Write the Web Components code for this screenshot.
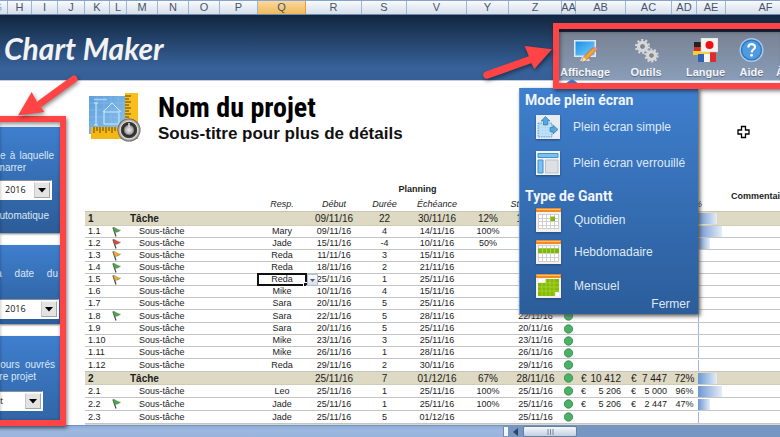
<!DOCTYPE html>
<html lang="fr">
<head>
<meta charset="utf-8">
<title>Gantt Chart Maker</title>
<style>
html,body{margin:0;height:100%;overflow:hidden;background:#fff}
body{font-family:"Liberation Sans",Arial,sans-serif;color:#1c1c1c}
</style>
</head>
<body>
<gantt-app></gantt-app>
<script>
const define=(name,html,init)=>customElements.define(name,class extends HTMLElement{
  constructor(){
    super();
    const t=document.createElement('template');
    t.innerHTML=html;
    this.attachShadow({mode:'open'}).append(t.content.cloneNode(true));
  }
  connectedCallback(){ if(init&&!this.ready){this.ready=true;init(this,this.shadowRoot);} }
});

/* Column letters of the sheet */
define('column-letters',`<style>
:host{display:flex;height:15px;box-sizing:border-box;flex:none;overflow:hidden;border-top:1px solid #86a3cc;border-bottom:1px solid #7189aa;background:linear-gradient(#f8fafd,#d6deeb);font-size:11px;line-height:13px;color:#465568}
span{flex:none;box-sizing:border-box;border-right:1px solid #9cb4d0;display:flex;justify-content:center}
span:last-child{flex:1 0 80px}
.on{background:linear-gradient(#f9d9a0,#f0b95a);border-right-color:#f29536}
.g{justify-content:flex-end;padding-right:5px;color:#7fb2dc}
</style>`,(el,root)=>{
  [['G',8],['H',24],['I',26],['J',27],['K',25],['L',17],['M',31],['N',31],['O',31],['P',38],['Q',48],['R',56],['S',45],['V',60],['Y',42],['Z',53],['AA',14],['AB',50],['AC',46],['AD',25],['AE',29],['AF',80]].forEach(([n,w])=>{
    const s=document.createElement('span');s.textContent=n;s.style.width=w+'px';
    if(n==='Q')s.className='on'; if(n==='G')s.className='g';
    root.append(s);
  });
});

/* Banner with logo and tools */
define('app-banner',`<style>
:host{display:flex;justify-content:space-between;height:65px;flex:none;background:linear-gradient(#12263f,#37629a 82%,#355f96);border-bottom:1px solid #c3cbdd;color:#f2f2f2}
.logo{display:flex;align-items:center;padding-left:4px;font:italic 700 30px/60px Lato,"Liberation Sans",sans-serif;white-space:nowrap}
nav{flex:0 0 221px;margin-top:14px;box-sizing:border-box;padding-top:6px;border-top:3px solid #1b2740;display:grid;grid-template-columns:52px 70px 49px 43px auto;align-items:start;background:linear-gradient(#788293,#8a9db9);overflow:hidden}
</style>
<div class="logo">Chart Maker</div>
<nav><slot></slot></nav>`);

define('tool-button',`<style>
:host{display:block;min-width:0}
button{all:unset;box-sizing:border-box;width:100%;display:flex;flex-direction:column;align-items:center;gap:2px;font-size:11px;line-height:15px;font-weight:700;color:#f3f5f8;white-space:nowrap;text-shadow:0 1px 1px #5a6780;cursor:pointer}
:host([cut]) button{align-items:flex-start;padding-left:3px}
.icon{height:25px;display:flex;align-items:center}
::slotted(svg){display:block}
</style><button type="button"><span class="icon"><slot name="icon"></slot></span><span><slot></slot></span></button>`);

/* Blue side cards */
define('side-card',`<style>
:host{display:block;box-sizing:border-box;overflow:hidden;color:#dce8f6;font-size:10px;line-height:12px;background:linear-gradient(#3f7fce,#2c5c98);box-shadow:0 1px 2px #777}
</style><slot></slot>`);

define('card-line',`<style>
:host{display:flex;justify-content:flex-end;white-space:nowrap;width:54px}
:host([spread]){justify-content:space-between}
</style><slot></slot>`);

define('drop-list',`<style>
:host{display:block;position:relative;height:20px;box-sizing:border-box;border:1px solid #8a8f98;border-left:0;border-right-color:#fff;border-bottom-color:#fff;background:#fff}
select{appearance:none;border:0;margin:0;width:100%;height:100%;background:none;padding:0 0 0 5px;font:9px/18px "Open Sans","Noto Sans",sans-serif;color:#111;outline:0}
:host([cut]) select{padding-left:0}
span{position:absolute;right:1px;top:1px;bottom:1px;width:16px;box-sizing:border-box;border:1px solid;border-color:#f6f6f6 #a5a5a5 #a5a5a5 #c8c8c8;background:#e3e3e3;pointer-events:none;display:flex;align-items:center;justify-content:center}
</style><select><option></option></select><span><svg width="8" height="5"><path d="M0 0h8L4 4.5z" fill="#000"/></svg></span>`,(el,root)=>{
  root.querySelector('option').textContent=el.getAttribute('value');
  root.querySelector('select').setAttribute('aria-label',el.getAttribute('label'));
});

define('project-title',`<style>
:host{display:flex;gap:17px;padding:11px 0 0 4px;color:#000}
svg{flex:none}
h1{margin:0;font:700 28px/32px "Roboto Condensed",Roboto,"Liberation Sans",sans-serif;white-space:nowrap}
h2{margin:0;font-size:17px;line-height:20px;font-weight:700;white-space:nowrap;color:#111}
</style>
<svg width="52" height="50" viewBox="0 0 52 50">
<defs><linearGradient id="b" x2="1" y2="1"><stop stop-color="#5f9fdb"/><stop offset="1" stop-color="#8cc0ee"/></linearGradient>
<radialGradient id="k"><stop offset="0" stop-color="#eee"/><stop offset=".35" stop-color="#aaa"/><stop offset=".5" stop-color="#2d2925"/><stop offset=".68" stop-color="#49433d"/><stop offset=".75" stop-color="#ddd"/><stop offset=".9" stop-color="#9b9b9b"/><stop offset="1" stop-color="#555"/></radialGradient></defs>
<path d="M0 4h37v38H0z" fill="url(#b)"/><path d="M0 11h37M0 18h37M0 25h37M8 4v32M15 4v32M22 4v32M29 4v32" stroke="#8fc0ec" stroke-width=".5"/>
<path d="M14 20 23 11l9 9M15 19v13h15V19M15 20h15M7 11v22M5 11h4M5 33h4" fill="none" stroke="#d0e8fb" stroke-width="1"/>
<path d="M5 7.500h13" stroke="#a8d0f4" stroke-width="1.500"/>
<path d="M36 1h13v46H2V35h34z" fill="#f5b714"/><path d="M36 1h13v34H36z" fill="#f8be1c"/>
<path d="M36 4h6M36 7h4M36 10h6M36 13h4M36 16h6M36 19h4M36 22h6M36 25h4M5 35v6M8 35v4M11 35v6M14 35v4M17 35v6M20 35v4M23 35v6M26 35v4" stroke="#5f4708" stroke-width="1"/>
<circle cx="40" cy="38" r="11.5" fill="url(#k)"/><path d="M40 31v4" stroke="#ddd" stroke-width="1.500"/>
</svg>
<div><h1>Nom du projet</h1><h2>Sous-titre pour plus de détails</h2></div>`);

/* Task table */
define('task-table',`<style>
:host{display:block;margin-top:38px}
table{border-collapse:separate;border-spacing:0;table-layout:fixed;width:100%;min-width:695px;font-size:9px;line-height:11px}
th,td{padding:0;font-weight:400;text-align:center;white-space:nowrap;vertical-align:middle}
thead tr{height:15px}thead i{display:flex;justify-content:center;margin:0 -10px}
thead tr+tr{height:14px}
td{height:11px;border-bottom:1px solid #c4c4c4;position:relative}
.tall td{height:12px}
.group td{background:#ddd9c3;font-size:10px;height:14px;border-color:#cfccba}
.group.tall td{height:12px}
.first td{height:13px;border-top:1px solid #c8c5b5}
td.l{text-align:left;padding-left:3px}
td.n{text-align:left;padding-left:12px}
.group td.l,.group td.n{font-weight:700}
.group td.n{padding-left:3px}
svg{display:block;margin:auto}
.flag svg{margin:0 0 0 2px}
.money{display:flex;justify-content:space-between;padding:0 5px}
.bar{display:block;height:11px;background:linear-gradient(90deg,#6d97d2,#e6edf8);margin-left:1px}
.none{width:1px;background:#9db9e0}
.pick{position:absolute;inset:-1px -1px -1px -1px;border:2px solid #111}
.pick::after{content:"";position:absolute;right:-3px;bottom:-3px;width:3px;height:3px;background:#111;border:1px solid #fff}
button{position:absolute;z-index:1;left:49px;top:0;width:11px;height:12px;padding:0;border:1px solid #b3bccb;background:linear-gradient(#fff,#d7dce6);display:flex;align-items:center}
</style>
<table><colgroup></colgroup><thead>
<tr><th colspan="5"></th><th colspan="2"><b style="padding-left:6px">Planning</b></th><th colspan="7"></th><th rowspan="2" style="text-align:left;padding-left:5px"><b>Commentaires</b></th></tr>
<tr><th colspan="3"></th><th><i>Resp.</i></th><th><i>Début</i></th><th><i>Durée</i></th><th><i>Échéance</i></th><th></th><th><i>Statut actuel</i></th><th></th><th></th><th></th><th></th><th style="text-align:left"><i style="justify-content:flex-start;margin:0 0 0 -3px">%</i></th></tr>
</thead><tbody></tbody></table>`,(el,root)=>{
  root.querySelector('colgroup').innerHTML=[25,17,131,48,56,45,60,42,53,14,50,46,25,29].map(w=>`<col style="width:${w}px">`).join('')+'<col>';
  const colours={g:'#4aa84a',r:'#e0453f',o:'#f0a832'};
  const flag=c=>c?`<svg width="10" height="10" viewBox="0 0 10 10"><path d="M1 .5 4 9.5" stroke="#444" stroke-width="1.2"/><path d="M1 .6c2-.8 3 1.6 7.6 2.6C7 4.600 5 5.600 2.700 5.300z" fill="${colours[c]}" stroke="#667055" stroke-width=".4"/></svg>`:'';
  const dot='<svg width="10" height="10" viewBox="0 0 10 10"><circle cx="4.500" cy="5" r="4.200" fill="#4cb166" stroke="#35804a" stroke-width=".8"/></svg>';
  const money=v=>v?`<div class="money"><span>€</span><span>${v}</span></div>`:'';
  const rows=[
   ['1','','Tâche','','09/11/16','22','30/11/16','12%','14/11/16',0,'','','',19],
   ['1.1','g','','Mary','09/11/16','4','14/11/16','100%','',0,'','','',24],
   ['1.2','r','','Jade','15/11/16','-4','10/11/16','50%','',0,'','','',12],
   ['1.3','o','','Reda','11/11/16','3','15/11/16','','',0,'','','',0],
   ['1.4','g','','Reda','18/11/16','2','21/11/16','','',0,'','','',0],
   ['1.5','o','','Reda','25/11/16','1','25/11/16','','25/11/16',0,'','','',0],
   ['1.6','','','Mike','10/11/16','4','15/11/16','','',0,'','','',0],
   ['1.7','','','Sara','20/11/16','5','25/11/16','','20/11/16',0,'','','',0],
   ['1.8','g','','Sara','22/11/16','5','28/11/16','','22/11/16',1,'','','',0],
   ['1.9','','','Sara','20/11/16','5','25/11/16','','20/11/16',1,'','','',0],
   ['1.10','','','Mike','23/11/16','3','25/11/16','','23/11/16',1,'','','',0],
   ['1.11','','','Mike','26/11/16','1','28/11/16','','26/11/16',1,'','','',0],
   ['1.12','','','Reda','29/11/16','2','30/11/16','','29/11/16',1,'','','',0],
   ['2','','Tâche','','25/11/16','7','01/12/16','67%','28/11/16',1,'10 412','7 447','72%',19],
   ['2.1','','','Leo','25/11/16','1','25/11/16','100%','25/11/16',1,'5 206','5 000','96%',24],
   ['2.2','g','','Jade','25/11/16','1','25/11/16','100%','25/11/16',1,'5 206','2 447','47%',12],
   ['2.3','','','Jade','25/11/16','5','01/12/16','','25/11/16',1,'','','',0],
   ['3','','Tâche','','','','','','',0,'','','',0]];
  const tall=['1.8','1.12','2','2.1','2.2','2.3'];
  root.querySelector('tbody').innerHTML=rows.map(r=>{
    const cls=[r[2]?'group':'',tall.includes(r[0])?'tall':'',r[0]==='1'?'first':''].join(' ').trim();
    const pick=r[0]==='1.5'?'<span class="pick"></span><button type="button" aria-label="Choisir"><svg width="5" height="3"><path d="M0 0h5L2.500 3z" fill="#4a5a78"/></svg></button>':'';
    return `<tr class="${cls}"><td class="l">${r[0]}</td><td class="flag">${flag(r[1])}</td><td class="n">${r[2]||'Sous-tâche'}</td><td>${r[3]}${pick}</td>`+
      r.slice(4,9).map(v=>`<td>${v}</td>`).join('')+`<td>${r[9]?dot:''}</td><td>${money(r[10])}</td><td>${money(r[11])}</td><td>${r[12]}</td><td><span class="bar${r[13]?'':' none'}"${r[13]?` style="width:${r[13]}px"`:''}></span></td><td></td></tr>`;
  }).join('');
});

/* Display menu */
define('view-menu',`<style>
:host{display:flex;flex-direction:column;box-sizing:border-box;width:179px;padding:3px 8px 4px 5px;color:#dfe9f6;font-size:12px;line-height:16px;background:linear-gradient(#3f7fce,#2b5d9a);border-left:1px solid #5a93da;box-shadow:2px 2px 4px #555}
button{all:unset;cursor:pointer;align-self:flex-end;line-height:12px}
.tip{position:absolute;left:40px;top:-9px}
</style><svg class="tip" width="24" height="9"><path d="M0 9 9 2q3-3 6 0l9 7z" fill="#3f7fce"/></svg><slot></slot><button type="button">Fermer</button>`);
define('menu-heading',`<style>:host{display:block}h3{margin:0;font:700 14px/18px Roboto,"Liberation Sans",sans-serif;color:#f0f5fb}</style><h3><slot></slot></h3>`);
define('menu-entry',`<style>:host{display:block}
button{all:unset;box-sizing:border-box;width:100%;display:flex;align-items:center;gap:13px;padding-left:11px;cursor:pointer;white-space:nowrap}
::slotted(svg){display:block;flex:none;filter:drop-shadow(0 1px 1px #23497a)}
</style><button type="button"><slot name="icon"></slot><span><slot></slot></span></button>`);

/* Bottom scroll strip */
define('sheet-scroll',`<style>
:host{display:flex;flex:none;height:12px;box-sizing:border-box;border-top:1px solid #6f94c9;background:#7797c2}
.tabs{flex:0 0 503px;background:linear-gradient(#8badda,#9eb8de 40%,#98b3dc)}
.grip{flex:0 0 5px;background:#f3f6fb;border-left:1px solid #6d87ae;box-sizing:border-box;margin:1px 0}
.track{flex:1;display:flex;align-items:center;padding-left:5px;gap:5px}
.thumb{width:54px;height:11px;box-sizing:border-box;border:1px solid #65809f;border-radius:2px;background:linear-gradient(#f5f8fc,#c4cfe0);display:flex;align-items:center;justify-content:center}
</style><div class="tabs"></div><div class="grip"></div><div class="track"><svg width="5" height="8"><path d="M5 0v8L0 4z" fill="#2c4468"/></svg><div class="thumb"><svg width="7" height="6"><path d="M1 0v6M3.500 0v6M6 0v6" stroke="#78879e"/></svg></div></div>`);

/* Red annotations */
define('red-frame',`<style>:host{position:absolute;box-sizing:border-box;border:6px solid #fe4444;box-shadow:1px 2px 4px #0008,inset 1px 2px 4px #0007;pointer-events:none}</style>`);

define('gantt-app',`<style>
:host{display:flex;flex-direction:column;height:100vh;position:relative;overflow:hidden}
main{flex:1;min-height:0;overflow:hidden;display:grid;grid-template-columns:60px 1fr;column-gap:25px;background:#fff}
aside{padding-top:46px;display:flex;flex-direction:column;gap:12px}
.c1{padding:23px 0 11px}.c2{padding:23px 0 5px}.c3{padding:23px 0 40px}
.c1 drop-list{width:52px;margin:6px 0 10px}.c2 drop-list{width:59px;margin-top:19px}.c3 drop-list{width:43px;margin-top:8px}
.w26{width:26px}.w49{width:49px}.w36{width:36px}
.du{width:64px;margin-left:-6px}.ours{width:57px;margin-left:-2px}
section{min-width:0}
view-menu{position:absolute;right:82px;top:88px}
.tools{right:-8px;width:235px;top:23px;height:66px}
.cards{left:-8px;width:74px;top:116px;bottom:11px}
.arrow{position:absolute;filter:drop-shadow(1px 2px 2px #0007)}
.a1{left:10px;top:70px}.a2{right:225px;top:40px}
.cursor{position:absolute;right:30px;top:125px}
</style>
<column-letters></column-letters>
<app-banner>
<tool-button><svg slot="icon" width="25" height="25" viewBox="0 0 25 25"><defs><linearGradient id="s" x2="1" y2="1"><stop stop-color="#1c8fe8"/><stop offset="1" stop-color="#77d0ff"/></linearGradient></defs><path d="M1 2h22v17H1z" fill="#dfe9f1"/><path d="M2.500 3.500h19v14h-19z" fill="url(#s)"/><path d="M9 19h6l2 4H7z" fill="#d7dde4"/><path d="m9 24 1.500-5L20 9.500l3 3L13.500 22z" fill="#f4a233" stroke="#9c5a17" stroke-width=".6"/><path d="m20 9.500 1.500-1.300 3 3L23 12.500z" fill="#e98ba0"/><path d="m9 24 1.500-5 3 3z" fill="#f7dfb6"/></svg>Affichage</tool-button>
<tool-button><svg slot="icon" width="25" height="25" viewBox="0 0 25 25"><g fill="none" stroke="#d5d7d9"><circle cx="8.500" cy="8.500" r="4" stroke-width="3.600"/><circle cx="8.500" cy="8.500" r="6.500" stroke-width="2.200" stroke-dasharray="2.040 2.040"/><circle cx="17.500" cy="17.500" r="3.800" stroke-width="3.400"/><circle cx="17.500" cy="17.500" r="6" stroke-width="2.200" stroke-dasharray="1.885 1.885"/></g><g fill="#858c96" stroke="#777" stroke-width=".7"><circle cx="8.500" cy="8.500" r="1.800"/><circle cx="17.500" cy="17.500" r="1.800"/></g></svg>Outils</tool-button>
<tool-button><svg slot="icon" width="25" height="25" viewBox="0 0 25 25"><path d="M1 4h14v5H1z" fill="#222"/><path d="M1 9h14v4H1z" fill="#d92b22"/><path d="M0 13h17v4H0z" fill="#f8cf34"/><path d="M5 16h6v8H5z" fill="#2e62b5"/><path d="M11 16h6v8h-6z" fill="#f5f5f5"/><path d="M17 14h6v10h-6z" fill="#e02c2c"/><path d="M8 0h17v14H8z" fill="#f5f2f0" stroke="#ccc" stroke-width=".5"/><circle cx="16.500" cy="7" r="4" fill="#f20d12"/></svg>Langue</tool-button>
<tool-button><svg slot="icon" width="25" height="25" viewBox="0 0 25 25"><circle cx="12.500" cy="12" r="11.300" fill="#2a74c0" stroke="#a7c8ea" stroke-width="1.400"/><circle cx="12.500" cy="12" r="9.300" fill="#4f9be0"/><path d="M9.300 9.600c0-4.600 6.700-4.300 6.700-.5 0 2.400-3.400 2.500-3.400 5.400" fill="none" stroke="#fff" stroke-width="2.200"/><circle cx="12.600" cy="17.300" r="1.400" fill="#fff"/></svg>Aide</tool-button>
<tool-button cut>À propos</tool-button>
</app-banner>
<main>
<aside>
<side-card class="c1"><card-line spread><span>e</span><span>à</span><span>laquelle</span></card-line><card-line class="w26">marrer</card-line><drop-list value="2016" label="Année de début"></drop-list><card-line class="w49">automatique</card-line></side-card>
<side-card class="c2"><card-line spread class="du"><span>la</span><span>date</span><span>du</span></card-line><drop-list value="2016" label="Année"></drop-list></side-card>
<side-card class="c3"><card-line spread class="ours"><span>jours</span><span>ouvrés</span></card-line><card-line class="w36">re projet</card-line><drop-list cut value="t" label="Jours ouvrés"></drop-list></side-card>
</aside>
<section><project-title></project-title><task-table></task-table></section>
</main>
<sheet-scroll></sheet-scroll>
<view-menu>
<menu-heading>Mode plein écran</menu-heading>
<menu-entry style="margin-top:6px"><svg slot="icon" width="24" height="24" viewBox="0 0 24 24"><path d="M0 0h24v24H0z" fill="#e9ecee"/><path d="M2 8h14v14H2z" fill="#a9d4f2" stroke="#5fa9da" stroke-dasharray="1.500 1"/><path d="M3 11h12M3 14h12M3 17h12M3 20h12M5 9v12M8 9v12M11 9v12M14 9v12" stroke="#cfe8f9" stroke-width=".8"/><path d="M7.500 10V6H5l4.500-4.500L14 6h-2.500v4zM14 12.500h3V10l5 4.500-5 4.500v-2.500h-3z" fill="#59a6d8" stroke="#2f7db5" stroke-width=".7"/></svg>Plein écran simple</menu-entry>
<menu-entry style="margin-top:12px"><svg slot="icon" width="24" height="24" viewBox="0 0 24 24"><path d="M0 0h24v24H0z" fill="#f1f4f6"/><path d="M2 2.500h20v4H2zM2 9h5v13H2z" fill="#7cc1ee" stroke="#3f94cf"/><path d="M9.500 9H22v13H9.500z" fill="#dcdfe3" stroke="#bcc1c7"/></svg>Plein écran verrouillé</menu-entry>
<menu-heading style="margin-top:12px">Type de Gantt</menu-heading>
<menu-entry style="margin-top:3px"><svg slot="icon" width="25" height="24" viewBox="0 0 25 24"><path d="M0 0h25v24H0z" fill="#f2efec"/><path d="M0 0h25v4H0z" fill="#f08a24"/><path d="M1 1.500h23" stroke="#fbc07c"/><path d="M2 6h21v15H2z" fill="#cfcfcf"/><path d="M3 7h3v3H3zM7 7h3v3H7zM11 7h3v3h-3zM15 7h3v3h-3zM19 7h3v3h-3zM3 11h3v2H3zM7 11h3v2H7zM11 11h3v2h-3zM19 11h3v2h-3zM3 14h3v3H3zM7 14h3v3H7zM11 14h3v3h-3zM15 14h3v3h-3zM19 14h3v3h-3zM3 18h3v2H3zM7 18h3v2H7zM11 18h3v2h-3zM15 18h3v2h-3zM19 18h3v2h-3z" fill="#fff"/><path d="M14.500 8.500H19V13h-4.500z" fill="#7fb800"/></svg>Quotidien</menu-entry>
<menu-entry style="margin-top:8px"><svg slot="icon" width="25" height="24" viewBox="0 0 25 24"><path d="M0 0h25v24H0z" fill="#f2efec"/><path d="M0 0h25v4H0z" fill="#f08a24"/><path d="M1 1.500h23" stroke="#fbc07c"/><path d="M2 5h21v17H2z" fill="#cfcfcf"/><path d="M3 6h3v2H3zM7 6h3v2H7zM11 6h3v2h-3zM15 6h3v2h-3zM19 6h3v2h-3zM3 14h3v3H3zM7 14h3v3H7zM11 14h3v3h-3zM15 14h3v3h-3zM19 14h3v3h-3zM3 18h3v3H3zM7 18h3v3H7zM11 18h3v3h-3zM15 18h3v3h-3zM19 18h3v3h-3z" fill="#fff"/><path d="M2 8.500h21V13H2z" fill="#7fb800"/><path d="M6.500 8.500V13M10.500 8.500V13M14.500 8.500V13M18.500 8.500V13" stroke="#a9d33f"/></svg>Hebdomadaire</menu-entry>
<menu-entry style="margin-top:10px"><svg slot="icon" width="25" height="24" viewBox="0 0 25 24"><path d="M0 0h25v24H0z" fill="#f2efec"/><path d="M0 0h25v4H0z" fill="#f08a24"/><path d="M1 1.500h23" stroke="#fbc07c"/><path d="M2 9h8V5h13v13h-4v4H2z" fill="#86bc00"/><path d="M2 13h21M2 17h21M10 9h13M6 9v13M10 5v17M14 5v17M18 5v17" stroke="#a9d33f" stroke-width=".8"/><path d="M3 5h3v3H3zM7 5h2v3H7zM20 19h3v3h-3z" fill="#fff"/></svg>Mensuel</menu-entry>
</view-menu>
<red-frame class="tools"></red-frame><red-frame class="cards"></red-frame>
<svg class="arrow a1" width="72" height="50" viewBox="10 70 72 50"><path d="M41 103 74 79" stroke="#fe4444" stroke-width="7" stroke-linecap="round"/><path d="M18 115.500 31.700 92l4 7.500 5 7.500 3.700 5z" fill="#fe4444"/></svg>
<svg class="arrow a2" width="75" height="45" viewBox="480 40 75 45"><path d="M487 75 532 59" stroke="#fe4444" stroke-width="7.500" stroke-linecap="round"/><path d="M552 49.300 524.700 46l4 10 2.500 7 3.200 6z" fill="#fe4444"/></svg>
<svg class="cursor" width="13" height="14" viewBox="0 0 13 14"><path d="M4.500 1.500h4v3.500h3.500v4H8.500v3.500h-4V9H1V5h3.500z" fill="#fff" stroke="#000" stroke-width="1.300"/></svg>
`);
</script>
</body>
</html>
